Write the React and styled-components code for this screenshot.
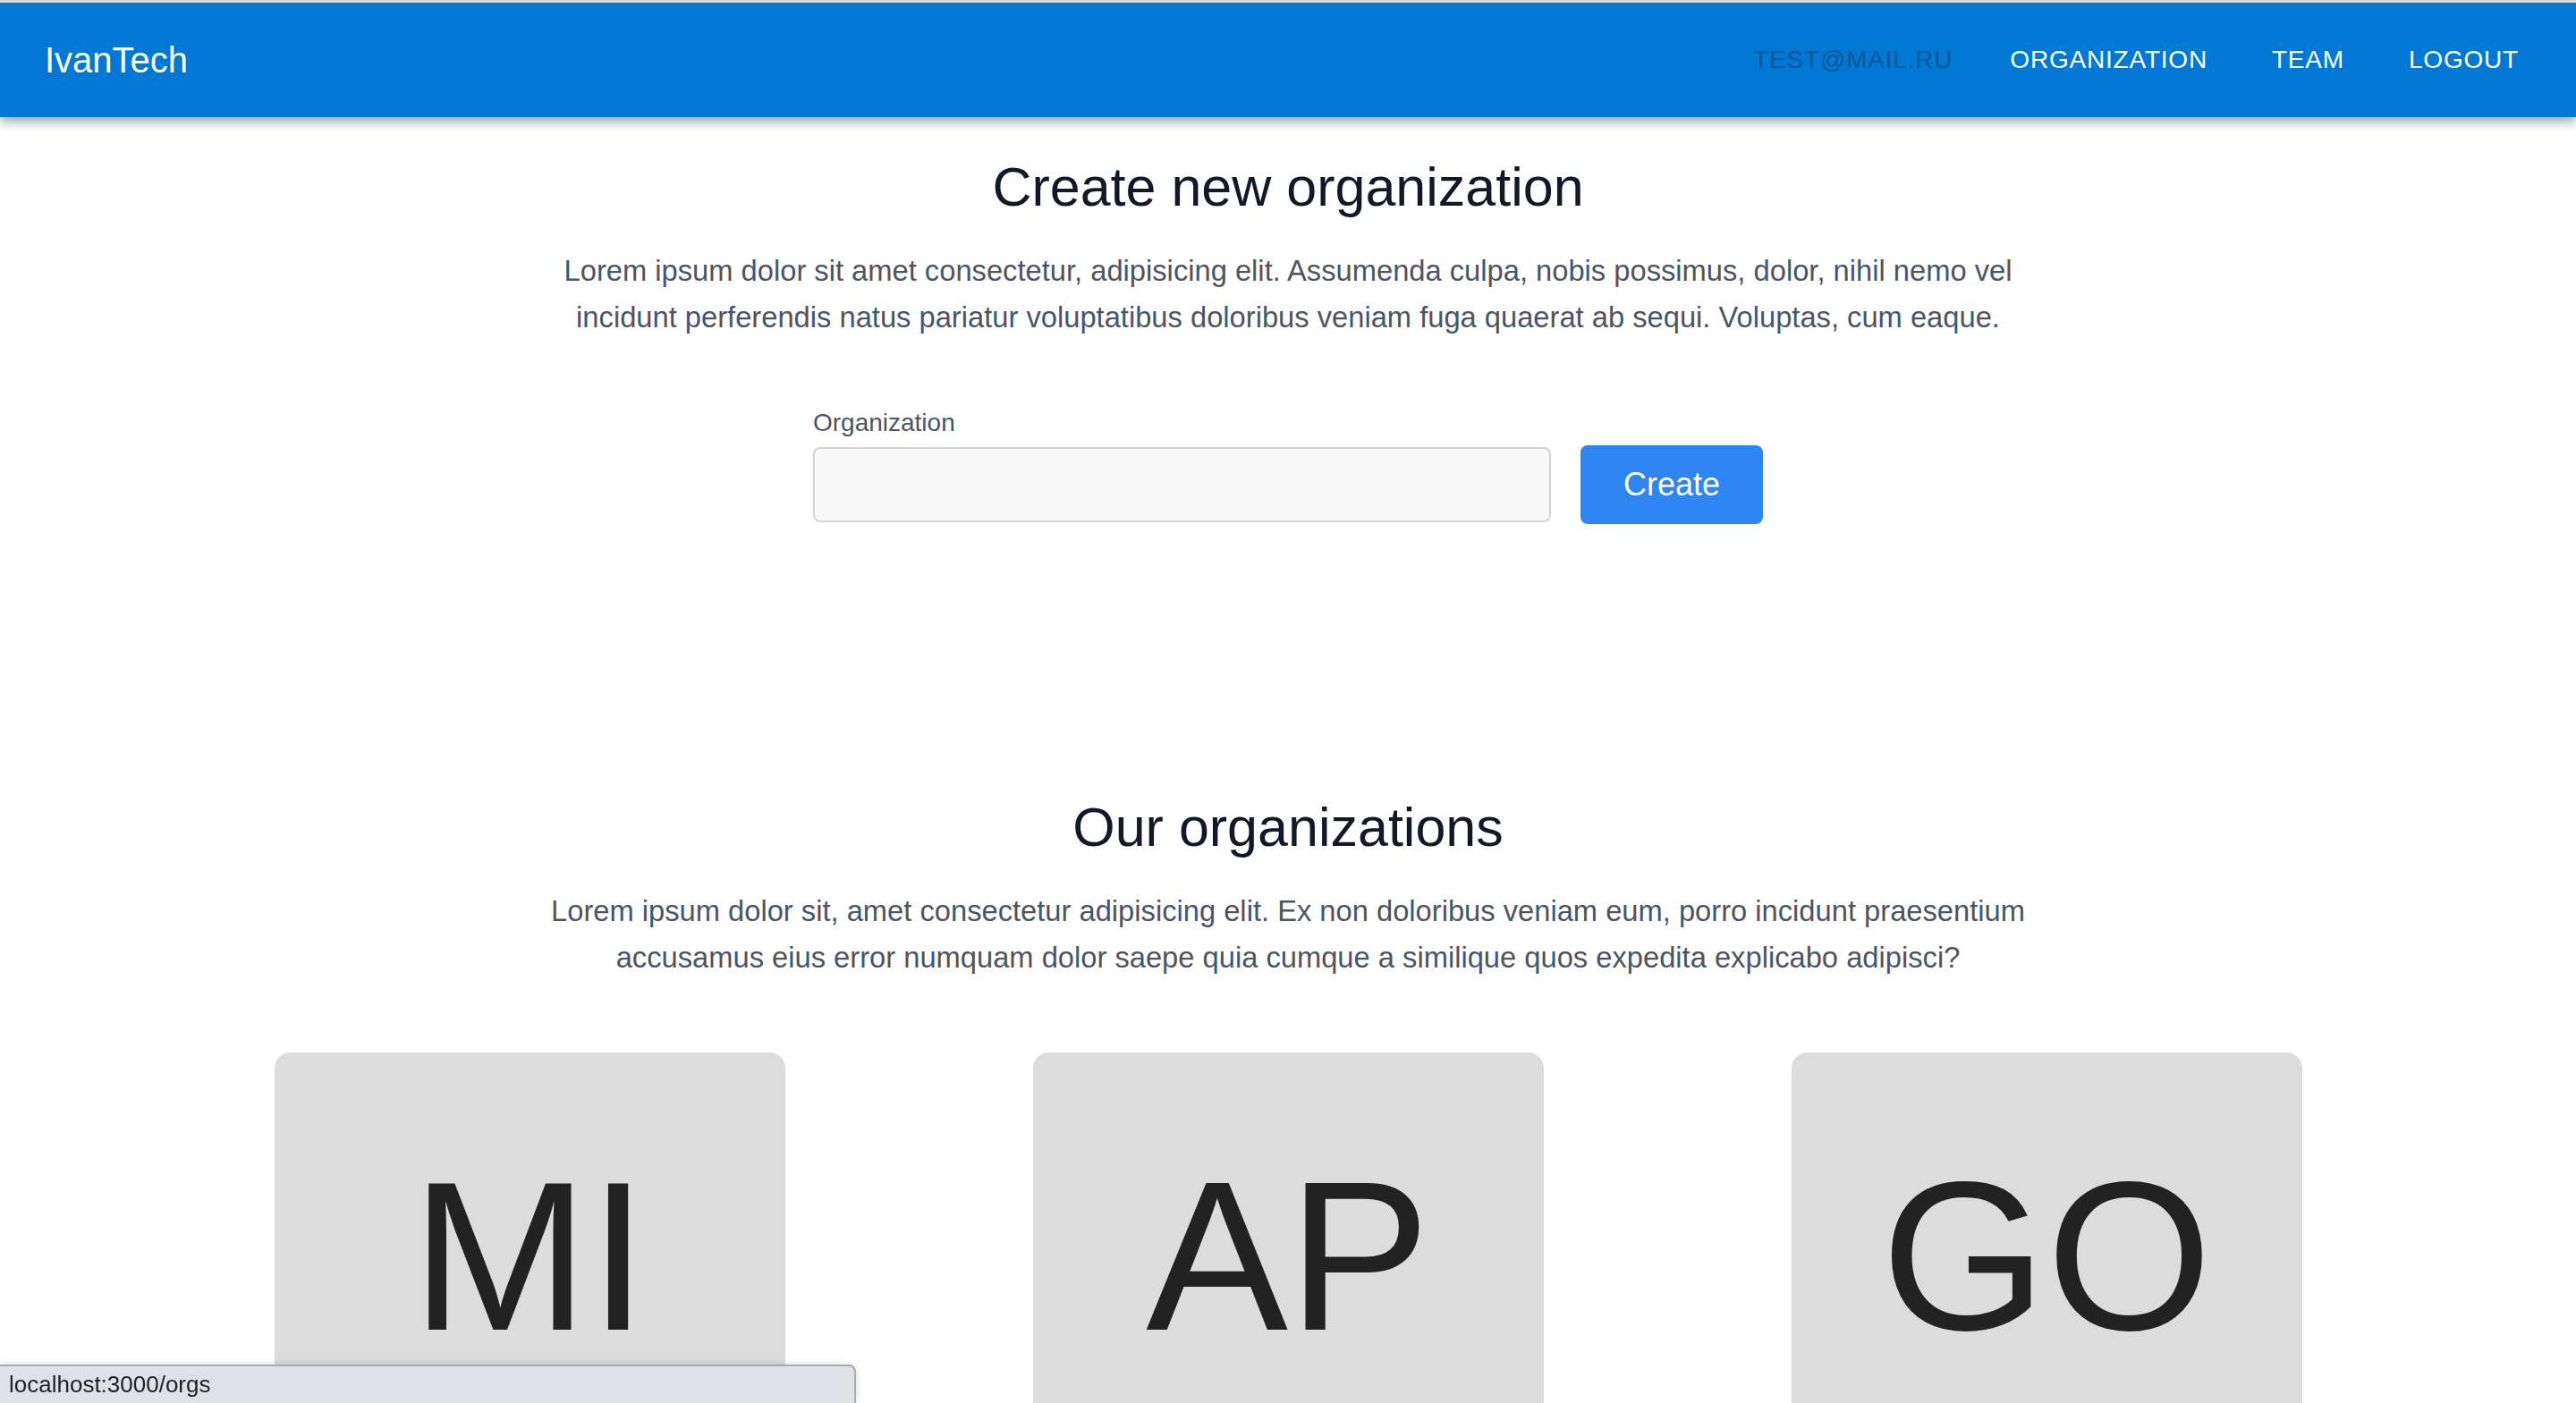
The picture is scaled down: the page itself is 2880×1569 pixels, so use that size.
import React from 'react';
import styled, { createGlobalStyle } from 'styled-components';

const GlobalStyle = createGlobalStyle`
  body {
    margin: 0;
    background: #fff;
    font-family: 'Liberation Sans', Helvetica, Arial, sans-serif;
    border-top: 3px solid #d8d8d8;
  }
`;

const Header = styled.header`
  position: relative;
  z-index: 2;
  height: 128px;
  display: flex;
  align-items: center;
  justify-content: space-between;
  padding: 0 48px 0 50px;
  background: #0078d4;
  box-shadow: 0 4px 8px -2px rgba(0, 0, 0, 0.2), 0 8px 10px 0 rgba(0, 0, 0, 0.14),
    0 2px 20px 0 rgba(0, 0, 0, 0.12);
`;

const Logo = styled.div`
  color: #fff;
  font-size: 40px;
  line-height: 1;
`;

const Nav = styled.nav`
  display: flex;
  align-items: center;
  gap: 40px;
`;

const NavItem = styled.a`
  padding: 0 16px;
  font-size: 28px;
  letter-spacing: 0.8px;
  text-transform: uppercase;
  text-decoration: none;
  color: ${props => (props.muted ? '#0a5799' : '#fff')};
  margin-right: ${props => (props.muted ? '-8px' : '0')};
`;

const Section = styled.section`
  display: flex;
  flex-direction: column;
  align-items: center;
  padding-top: ${props => props.top}px;
`;

const Title = styled.h1`
  margin: 0 0 32px;
  font-size: 61px;
  line-height: 72px;
  font-weight: 400;
  color: #111827;
  text-align: center;
`;

const Lead = styled.p`
  margin: 0;
  max-width: 1700px;
  font-size: 32.7px;
  line-height: 52px;
  color: #4b5563;
  text-align: center;
`;

const Form = styled.form`
  display: flex;
  align-items: flex-end;
  gap: 33px;
  margin-top: 64px;
`;

const Field = styled.div`
  display: flex;
  flex-direction: column;
`;

const Label = styled.label`
  font-size: 28px;
  line-height: 56px;
  color: #4b5563;
  margin-bottom: -1px;
`;

const Input = styled.input`
  box-sizing: border-box;
  width: 825px;
  height: 84px;
  padding: 0 24px;
  font-size: 32px;
  font-family: inherit;
  background: #f8f8f8;
  border: 2px solid #d1d5db;
  border-radius: 8px;
  outline: none;
`;

const Button = styled.button`
  height: 88px;
  padding: 0 48px;
  margin-bottom: -2px;
  border: 0;
  border-radius: 8px;
  background: #2e86f5;
  color: #fff;
  font-family: inherit;
  font-size: 36px;
  cursor: pointer;
`;

const Cards = styled.div`
  display: grid;
  grid-template-columns: repeat(3, 848px);
  justify-content: center;
  justify-items: center;
  margin-top: 80px;
`;

const Card = styled.div`
  width: 571px;
  height: 456px;
  display: flex;
  align-items: center;
  justify-content: center;
  background: #dcdcdc;
  border-radius: 18px 18px 0 0;
  font-size: 238px;
  line-height: 1;
  color: #222;
`;

const StatusBubble = styled.div`
  position: fixed;
  left: 0;
  bottom: 0;
  z-index: 5;
  box-sizing: border-box;
  width: 957px;
  height: 43px;
  padding: 3px 10px 0;
  background: #dee1e6;
  border-top: 2px solid #a9abaf;
  border-right: 2px solid #a9abaf;
  border-top-right-radius: 8px;
  box-shadow: 0 0 8px rgba(0, 0, 0, 0.15);
  font-size: 26px;
  line-height: 34px;
  color: #202124;
`;

const orgs = ['MI', 'AP', 'GO'];

export default function App() {
  return (
    <>
      <GlobalStyle />
      <Header>
        <Logo>IvanTech</Logo>
        <Nav>
          <NavItem muted>test@mail.ru</NavItem>
          <NavItem href="#orgs">Organization</NavItem>
          <NavItem href="#team">Team</NavItem>
          <NavItem href="#logout">Logout</NavItem>
        </Nav>
      </Header>
      <Section top={42}>
        <Title>Create new organization</Title>
        <Lead>
          Lorem ipsum dolor sit amet consectetur, adipisicing elit. Assumenda culpa, nobis
          possimus, dolor, nihil nemo vel incidunt perferendis natus pariatur voluptatibus
          doloribus veniam fuga quaerat ab sequi. Voluptas, cum eaque.
        </Lead>
        <Form onSubmit={e => e.preventDefault()}>
          <Field>
            <Label htmlFor="org">Organization</Label>
            <Input id="org" type="text" />
          </Field>
          <Button type="submit">Create</Button>
        </Form>
      </Section>
      <Section top={305}>
        <Title>Our organizations</Title>
        <Lead>
          Lorem ipsum dolor sit, amet consectetur adipisicing elit. Ex non doloribus veniam
          eum, porro incidunt praesentium accusamus eius error numquam dolor saepe quia
          cumque a similique quos expedita explicabo adipisci?
        </Lead>
        <Cards>
          {orgs.map(name => (
            <Card key={name}>{name}</Card>
          ))}
        </Cards>
      </Section>
      <StatusBubble>localhost:3000/orgs</StatusBubble>
    </>
  );
}
